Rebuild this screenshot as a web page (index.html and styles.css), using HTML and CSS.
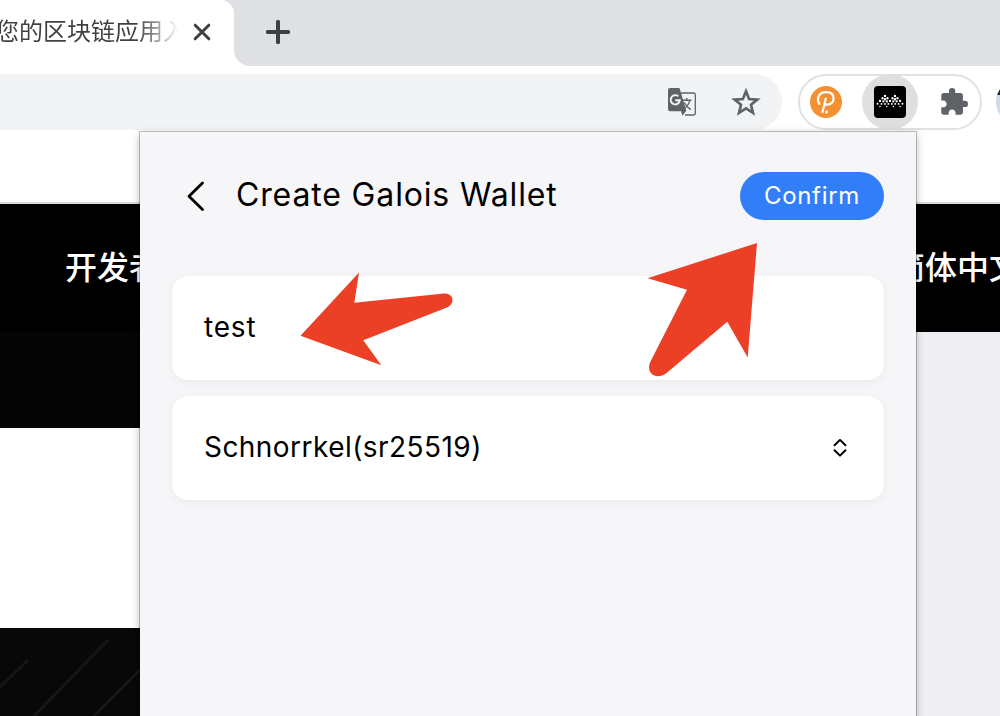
FILE: index.html
```html
<!DOCTYPE html>
<html lang="zh-CN">
<head>
<meta charset="utf-8">
<title>Create Galois Wallet</title>
<link rel="stylesheet" href="styles.css">
</head>
<body>
<div class="browser">
  <header class="tabstrip">
    <div class="tab">
      <span class="tab-title">您的区块链应用入</span>
      <svg class="tab-close" width="20" height="20" viewBox="0 0 20 20"><path d="M3.2 3.2l13.6 13.6M16.8 3.2L3.2 16.8"/></svg>
    </div>
    <div class="tab-rest">
      <svg class="tab-add" width="24" height="24" viewBox="0 0 24 24"><path d="M12 1.8v20.4M1.8 12h20.4"/></svg>
    </div>
  </header>
  <div class="toolbar">
    <div class="omnibox">
      <svg width="28" height="28" viewBox="0 0 28 28">
        <path d="M13 5h12.5a1.8 1.8 0 0 1 1.8 1.8v18.4a1.8 1.8 0 0 1-1.8 1.8H17" fill="none" stroke="#5f6368" stroke-width="1.3"/>
        <path d="M2 0h9.5l1.3 4.3 5.5 18.4L14.5 27.7 13 23.3H2a2 2 0 0 1-2-2V2a2 2 0 0 1 2-2z" fill="#5f6368"/>
        <path d="M10.3 8.3a4.6 4.6 0 1 0 1.5 4H7.3" fill="none" stroke="#f1f3f4" stroke-width="1.9"/>
        <path d="M14.5 12.3h9M18.7 10v2.3M21.7 12.5c-.6 3.5-3 6.3-5.7 8.5M16.3 14.5c1.5 3 3.6 5.3 6.4 7.2" fill="none" stroke="#5f6368" stroke-width="1.4"/>
      </svg>
      <svg width="30" height="28" viewBox="0 0 30 28"><path d="M15 3.3l3.1 7.7 8.2.6-6.3 5.2 2 8-7-4.4-7 4.4 2-8-6.3-5.2 8.2-.6z" fill="none" stroke="#5f6368" stroke-width="2.7"/></svg>
    </div>
    <div class="extensions">
      <svg width="32" height="32" viewBox="0 0 32 32">
        <circle cx="16" cy="16" r="16" fill="#f39132"/>
        <path d="M9.4 17.8C5.800 12 9.500 6.200 16 6.200c4.900 0 7.600 2.600 7.600 6.300 0 4.200-3.600 6.700-8.300 6.100M15.800 12.500L12.500 26" fill="none" stroke="#fff" stroke-width="2.2" stroke-linecap="round"/>
        <circle cx="16.500" cy="26" r="1.500" fill="#fff"/>
      </svg>
      <span class="ext-active">
        <svg width="32" height="32" viewBox="0 0 32 32">
          <rect width="32" height="32" rx="4"/>
          <g fill="none" stroke="#fff" stroke-linecap="round">
            <path d="M11 10h.01M21 10h.01M8.500 12.300h.01M13.500 12.300h.01M18.500 12.300h.01M23.500 12.300h.01M11 13.300h.01M21 13.300h.01" stroke-width="2.400"/>
            <path d="M6 15h.01M9.400 15.400h.01M12.800 15.400h.01M16 15h.01M19.300 15.400h.01M22.700 15.400h.01M26 15h.01" stroke-width="2.300"/>
            <path d="M3.500 17.700h.01M7.500 17.900h.01M11 17.900h.01M14.300 17.900h.01M17.800 17.900h.01M21.200 17.900h.01M24.600 17.900h.01M28.500 17.700h.01" stroke-width="1.900"/>
            <path d="M6 20.500h.01M12.700 20.500h.01M19.400 20.500h.01M26 20.500h.01" stroke-width="1.600"/>
          </g>
        </svg>
      </span>
      <svg width="28" height="28" viewBox="1 1 22 22"><path d="M20.500 11H19V7c0-1.100-.9-2-2-2h-4V3.500a2.500 2.500 0 0 0-5 0V5H4c-1.100 0-1.990.9-1.990 2v3.800H3.500c1.490 0 2.700 1.210 2.700 2.700s-1.210 2.700-2.700 2.700H2V20c0 1.100.9 2 2 2h3.800v-1.500c0-1.490 1.210-2.700 2.700-2.700s2.700 1.210 2.700 2.700V22H17c1.100 0 2-.9 2-2v-4h1.500a2.500 2.500 0 0 0 0-5z" fill="#5f6368"/></svg>
    </div>
    <span class="avatar"></span>
  </div>
  <main class="page">
    <div class="page-top"></div>
    <nav class="site-nav"><span>开发者</span><span class="language">简体中文</span></nav>
    <div class="page-body">
      <div class="page-left">
        <div class="band"></div>
        <div class="blank"></div>
        <svg width="140" height="88" viewBox="0 0 140 88">
          <rect width="140" height="88" fill="#080808"/>
          <g stroke="#161616" stroke-width="3"><path d="M-3 62L28 32M34 88L108 12M94 88L145 37"/></g>
        </svg>
      </div>
      <div class="page-right"></div>
    </div>
  </main>
</div>

<section class="popup">
  <header class="popup-header">
    <svg class="back" width="20" height="32" viewBox="0 0 20 32"><path d="M16.500 3L3 16.300 16.500 29.500"/></svg>
    <h1>Create Galois Wallet</h1>
    <button class="confirm">Confirm</button>
  </header>
  <div class="field name-field">test</div>
  <div class="field">
    <span class="algorithm">Schnorrkel(sr25519)</span>
    <svg class="updown" width="14" height="20" viewBox="0 0 14 20"><path d="M1.500 7.300L7 1.900l5.500 5.400M1.500 12.200L7 17.600l5.500-5.400"/></svg>
  </div>
</section>

<svg class="arrows" width="1000" height="716" viewBox="0 0 1000 716">
  <path d="M300.500 335.700L359 272.500 354.300 302.800 444 293.600C454 293.200 455.500 303.800 447 307.600L363.300 340.200 381.300 365.300z"/>
  <path d="M757 243L647.500 278.300 687 289.800 650.500 361.500C645 373.500 656 380.500 666 373.500L727.300 321.700 747.700 357.500z"/>
</svg>
</body>
</html>
```
FILE: styles.css
```css
* { box-sizing: border-box; }
body {
  margin: 0;
  width: 1000px;
  height: 716px;
  overflow: hidden;
  position: relative;
  background: #fff;
  font-family: Inter, "Noto Sans CJK SC", sans-serif;
}
svg { display: block; flex: none; }
.browser { height: 716px; display: flex; flex-direction: column; }

.tabstrip { height: 66px; display: flex; background: linear-gradient(90deg, #dee0e4 234px, #fff 234px); }
.tab {
  width: 234px;
  display: flex;
  align-items: center;
  justify-content: space-between;
  padding: 0 22px 2px 0;
  background: #fff;
  border-top-right-radius: 14px;
}
.tab-title {
  width: 188px;
  margin: 0 0 5px -5px;
  white-space: nowrap;
  font: 24px/36px "Noto Sans CJK SC", sans-serif;
  color: transparent;
  background: linear-gradient(90deg, #3c4043 142px, rgba(60, 64, 67, 0) 184px);
  background-clip: text;
  -webkit-background-clip: text;
}
.tab-close, .tab-add { fill: none; stroke: #3c4043; stroke-linecap: round; }
.tab-close { stroke-width: 3; }
.tab-add { stroke-width: 4; }
.tab-rest {
  flex: 1;
  display: flex;
  align-items: center;
  padding: 0 0 2px 32px;
  background: #dee0e4;
  border-bottom-left-radius: 16px;
}

.toolbar { height: 64px; padding-top: 8px; display: flex; flex: none; overflow: hidden; }
.omnibox {
  width: 782px;
  height: 56px;
  flex: none;
  padding-right: 21px;
  display: flex;
  align-items: center;
  justify-content: flex-end;
  gap: 35px;
  background: #f1f3f4;
  border-radius: 0 28px 28px 0;
}
.extensions {
  width: 184px;
  height: 56px;
  flex: none;
  margin-left: 16px;
  padding: 0 10px;
  display: flex;
  align-items: center;
  gap: 22px;
  border: 2px solid #e1e2e3;
  border-radius: 28px;
}
.ext-active {
  width: 56px;
  height: 56px;
  flex: none;
  display: grid;
  place-items: center;
  border-radius: 50%;
  background: #dfdfdf;
  margin-left: -2px;
}
.avatar {
  width: 44px;
  height: 44px;
  margin: 6px 0 0 14px;
  flex: none;
  border-radius: 50%;
  background: linear-gradient(#c8d4e2 20%, #23272d 20% 34%, #cfdae7 34%);
}

.page { flex: 1; display: flex; flex-direction: column; }
.page-top { height: 74px; border-bottom: 2px solid #d9dae0; }
.site-nav {
  height: 128px;
  display: flex;
  justify-content: space-between;
  align-items: center;
  padding: 0 0 7px 65px;
  overflow: hidden;
  background: #000;
  color: #fff;
  font: 500 32px/48px "Noto Sans CJK SC", sans-serif;
}
.language { width: 107px; white-space: nowrap; }
.page-body { flex: 1; display: flex; }
.page-left { width: 140px; }
.band { height: 96px; background: #050505; }
.blank { height: 200px; background: #fff; }
.page-right { flex: 1; background: #efeef3; }

.popup {
  position: absolute;
  left: 140px;
  top: 132px;
  width: 776px;
  height: 600px;
  padding: 40px 32px 0;
  background: #f6f6f9;
  box-shadow: 0 0 0 1px rgba(0, 0, 0, .22), 0 2px 8px rgba(0, 0, 0, .3);
  color: #000;
}
.popup-header { height: 48px; margin-bottom: 56px; display: flex; align-items: center; }
.back { margin-left: 14px; fill: none; stroke: #000; stroke-width: 2.8; stroke-linecap: round; stroke-linejoin: round; }
.popup h1 { flex: 1; margin: 0 0 2px 30px; font-size: 32px; font-weight: 400; line-height: 40px; letter-spacing: .85px; white-space: nowrap; }
.confirm {
  width: 144px;
  height: 48px;
  padding: 0;
  border: 0;
  border-radius: 24px;
  background: #317ef8;
  color: #fff;
  font: 400 24px/46px Inter, sans-serif;
  letter-spacing: .7px;
}
.field {
  height: 104px;
  margin-bottom: 16px;
  padding: 0 37px 0 32px;
  display: flex;
  align-items: center;
  justify-content: space-between;
  border-radius: 16px;
  background: #fff;
  box-shadow: 0 2px 10px rgba(0, 0, 0, .05);
  font-size: 28px;
  line-height: 34px;
  letter-spacing: .45px;
}
.algorithm { padding-bottom: 3px; }
.name-field { padding-bottom: 3px; letter-spacing: .8px; }
.updown { fill: none; stroke: #000; stroke-width: 2; stroke-linecap: round; stroke-linejoin: round; }
.arrows { position: absolute; left: 0; top: 0; fill: #eb4026; pointer-events: none; }
```
